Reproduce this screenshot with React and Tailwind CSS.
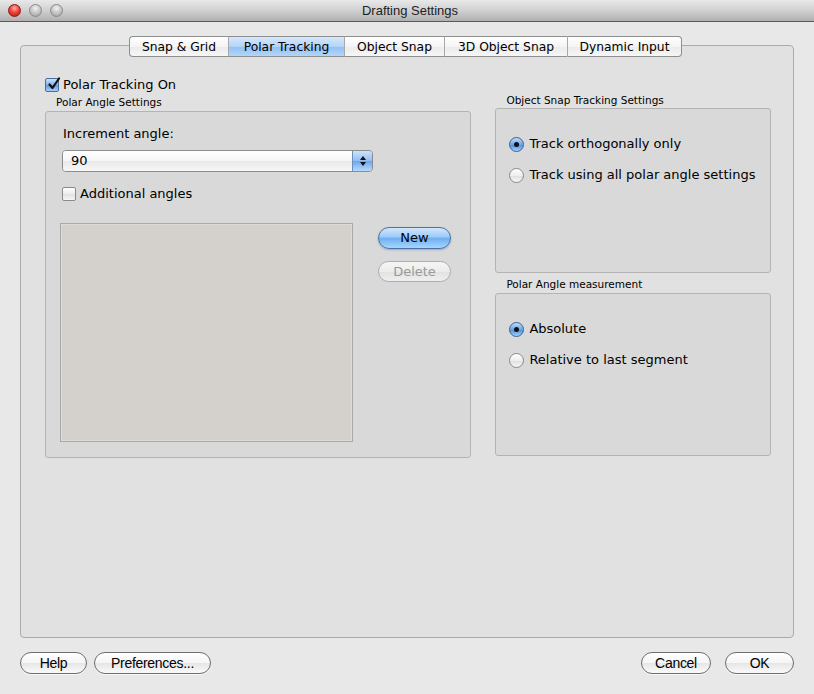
import React from "react";

const font = "font-['DejaVu_Sans','Liberation_Sans',Arial,sans-serif]";

function Light({ red }) {
  return (
    <div
      className={`w-[13px] h-[13px] rounded-full border ${
        red
          ? "border-[#8a1a14] bg-[radial-gradient(circle_at_50%_30%,#ffb0a8_0%,#f0453a_45%,#b0120a_100%)]"
          : "border-[#8a8a8a] bg-[radial-gradient(circle_at_50%_30%,#f2f2f2_0%,#c6c6c6_50%,#9a9a9a_100%)]"
      }`}
    />
  );
}

function Tab({ label, selected, first, last }) {
  return (
    <div
      className={`h-[21px] flex items-center justify-center pt-[1px] text-[12.3px] text-black border-y border-[#8e8e8e] ${
        first ? "border-l rounded-l-[4px]" : "border-l border-l-[#a8a8a8]"
      } ${last ? "border-r rounded-r-[4px]" : ""} ${
        selected
          ? "bg-[linear-gradient(to_bottom,#d6e8fc_0%,#b3d4f8_50%,#92c0f4_52%,#b2d6fb_100%)]"
          : "bg-[linear-gradient(to_bottom,#ffffff_0%,#f4f4f4_50%,#ebebeb_52%,#f6f6f6_100%)]"
      }`}
    >
      {label}
    </div>
  );
}

function Checkbox({ checked }) {
  return checked ? (
    <div className="w-[14px] h-[14px] shrink-0 rounded-[2px] border border-[#4a6d9c] bg-[linear-gradient(to_bottom,#c8e0fa,#7fb3ec_50%,#5b9be6_52%,#a8d0f8)] relative flex items-center justify-center">
      <svg width="14" height="14" viewBox="0 0 14 14" className="absolute -top-[2px] left-[1px]">
        <path d="M2.5 7.5 L5.5 11 L12 1.5" fill="none" stroke="#111" strokeWidth="2.2" strokeLinecap="round" strokeLinejoin="round" />
      </svg>
    </div>
  ) : (
    <div className="w-[14px] h-[14px] shrink-0 rounded-[2px] border border-[#8a8a8a] bg-[linear-gradient(to_bottom,#ffffff,#ececec_50%,#e2e2e2_52%,#f6f6f6)]" />
  );
}

function Radio({ checked }) {
  return checked ? (
    <div className="w-[15px] h-[15px] shrink-0 rounded-full border border-[#3c5f91] bg-[linear-gradient(to_bottom,#c2dcf9,#6aa6ea_50%,#4f92e2_55%,#a6d0fa)] flex items-center justify-center">
      <div className="w-[5px] h-[5px] rounded-full bg-[#111]" />
    </div>
  ) : (
    <div className="w-[15px] h-[15px] shrink-0 rounded-full border border-[#8a8a8a] bg-[linear-gradient(to_bottom,#ffffff,#eeeeee_50%,#e0e0e0_55%,#f8f8f8)]" />
  );
}

function PillButton({ children, className = "" }) {
  return (
    <div
      className={`h-[22px] rounded-full border border-[#6e6e6e] bg-[linear-gradient(to_bottom,#ffffff_0%,#f5f5f5_50%,#e6e6e6_52%,#fafafa_100%)] flex items-center justify-center text-[14px] text-black font-['Liberation_Sans',Arial,sans-serif] tracking-[-0.3px] shadow-[0_1px_0_rgba(255,255,255,0.7)] ${className}`}
    >
      {children}
    </div>
  );
}

export default function App() {
  return (
    <div className={`w-[814px] h-[694px] bg-[#e8e8e8] flex flex-col ${font}`}>
      {/* title bar */}
      <div className="h-[22px] shrink-0 relative flex items-center justify-center border-b border-[#5a5a5a] bg-[linear-gradient(to_bottom,#e9e9e9_0%,#d0d0d0_50%,#b0b0b0_100%)]">
        <div className="absolute left-[8px] top-[4px] flex gap-[8px]">
          <Light red />
          <Light />
          <Light />
        </div>
        <span className="text-[13px] text-[#222] pl-[6px] font-['Liberation_Sans',Arial,sans-serif]">Drafting Settings</span>
      </div>

      {/* tabs */}
      <div className="mt-[14px] flex justify-center relative z-10 pr-[3px]">
        <div className="flex">
          <div className="w-[99px]"><Tab label="Snap & Grid" first /></div>
          <div className="w-[116px]"><Tab label="Polar Tracking" selected /></div>
          <div className="w-[100px]"><Tab label="Object Snap" /></div>
          <div className="w-[123px]"><Tab label="3D Object Snap" /></div>
          <div className="w-[115px]"><Tab label="Dynamic Input" last /></div>
        </div>
      </div>

      {/* tab box */}
      <div className="mx-[20px] -mt-[12px] h-[593px] shrink-0 rounded-[4px] border border-[#ababab] bg-[#e1e1e1] pt-[31px] pl-[24px] pr-[22px]">
        <div className="h-[16px] flex items-center gap-[4px]">
          <Checkbox checked />
          <span className="text-[13px] text-black">Polar Tracking On</span>
        </div>

        <div className="flex mt-[1px]">
          {/* left column */}
          <div className="w-[427px] flex flex-col">
            <div className="h-[17px] pl-[11px] text-[10.5px] text-black leading-[17px]">Polar Angle Settings</div>
            <div className="h-[347px] rounded-[3px] border border-[#b4b4b4] bg-[#d9d9d9] pl-[16px] pt-[14px]">
              <div className="h-[16px] pl-[1px] text-[13px] leading-[16px] text-black">Increment angle:</div>
              <div className="mt-[8px] w-[311px] h-[22px] rounded-[4px] border border-[#8c8c8c] flex overflow-hidden">
                <div className="flex-1 flex items-center pl-[8px] text-[13px] text-black bg-[linear-gradient(to_bottom,#ffffff_0%,#f6f6f6_50%,#e9e9e9_52%,#f7f7f7_100%)]">
                  90
                </div>
                <div className="w-[20px] border-l border-[#6c8fc0] flex items-center justify-center bg-[linear-gradient(to_bottom,#cde3fb_0%,#8fbef3_50%,#6aa8ee_52%,#b9dafc_100%)]">
                  <svg width="8" height="12" viewBox="0 0 8 12">
                    <path d="M4 1 L7 5 L1 5 Z" fill="#111" />
                    <path d="M4 11 L7 7 L1 7 Z" fill="#111" />
                  </svg>
                </div>
              </div>
              <div className="mt-[14px] h-[16px] flex items-center gap-[4px]">
                <Checkbox />
                <span className="text-[13px] text-black">Additional angles</span>
              </div>
              <div className="mt-[21px] flex -ml-[2px]">
                <div className="w-[293px] h-[219px] border border-[#a9a9a9] bg-[#d4d0cb] shadow-[inset_0_0_0_1px_#dedbd6]" />
                <div className="ml-[25px] mt-[4px] flex flex-col w-[73px]">
                  <div className="h-[22px] rounded-full border border-[#4a72a8] bg-[linear-gradient(to_bottom,#d2e7fd_0%,#9ccaf7_45%,#6fb0f2_52%,#a6d6fe_100%)] flex items-center justify-center text-[13px] text-black shadow-[0_1px_2px_rgba(40,80,140,0.35)]">
                    New
                  </div>
                  <div className="mt-[12px] h-[21px] rounded-full border border-[#adadad] bg-[linear-gradient(to_bottom,#f6f6f6_0%,#ececec_50%,#e2e2e2_52%,#efefef_100%)] flex items-center justify-center text-[13px] text-[#9a9a9a]">
                    Delete
                  </div>
                </div>
              </div>
            </div>
          </div>

          {/* right column */}
          <div className="ml-[24px] w-[276px] flex flex-col -mt-[2px]">
            <div className="h-[16px] pl-[11px] text-[10.5px] text-black leading-[16px]">Object Snap Tracking Settings</div>
            <div className="h-[165px] rounded-[3px] border border-[#b4b4b4] bg-[#d9d9d9] pl-[13px] pt-[27px]">
              <div className="h-[16px] flex items-center gap-[5px]">
                <Radio checked />
                <span className="text-[13px] text-black">Track orthogonally only</span>
              </div>
              <div className="mt-[15px] h-[16px] flex items-center gap-[5px]">
                <Radio />
                <span className="text-[13px] text-black whitespace-nowrap">Track using all polar angle settings</span>
              </div>
            </div>
            <div className="h-[20px] pl-[11px] text-[10.5px] text-black leading-[15px] flex items-end pb-[1px]">Polar Angle measurement</div>
            <div className="h-[163px] rounded-[3px] border border-[#b4b4b4] bg-[#d9d9d9] pl-[13px] pt-[27px]">
              <div className="h-[16px] flex items-center gap-[5px]">
                <Radio checked />
                <span className="text-[13px] text-black">Absolute</span>
              </div>
              <div className="mt-[15px] h-[16px] flex items-center gap-[5px]">
                <Radio />
                <span className="text-[13px] text-black">Relative to last segment</span>
              </div>
            </div>
          </div>
        </div>
      </div>

      {/* bottom buttons */}
      <div className="mt-[14px] mx-[20px] flex items-center">
        <PillButton className="w-[67px]">Help</PillButton>
        <PillButton className="w-[117px] ml-[7px]">Preferences...</PillButton>
        <div className="flex-1" />
        <PillButton className="w-[70px]">Cancel</PillButton>
        <PillButton className="w-[69px] ml-[14px]">OK</PillButton>
      </div>
    </div>
  );
}
